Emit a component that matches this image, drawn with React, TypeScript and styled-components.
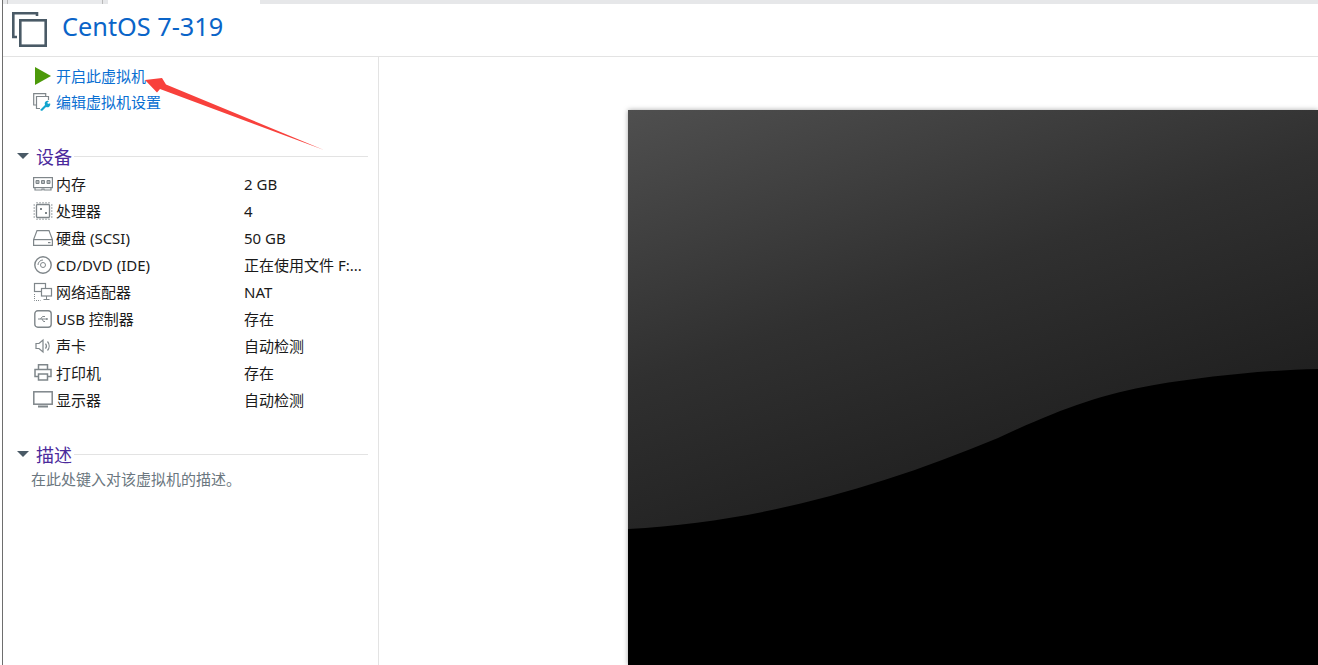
import styled, { createGlobalStyle } from "styled-components";

const GlobalStyle = createGlobalStyle`
    html, body {
        margin: 0;
        padding: 0;
        height: 100%;
        background: #ffffff;
        overflow: hidden;
    }
    #root {
        height: 100%;
    }
`;

const Page = styled.div`
    position: relative;
    width: 1318px;
    height: 665px;
    box-sizing: border-box;
    padding-left: 3px;
    display: flex;
    flex-direction: column;
    font-family: "Noto Sans", "Noto Sans CJK SC", sans-serif;
    overflow: hidden;
    background: linear-gradient(90deg, #ffffff 0, #ffffff 2px, #6e6e6e 2px, #6e6e6e 3px, #ffffff 3px);
`;

const TabStrip = styled.div`
    height: 4px;
    flex: none;
    display: flex;
    background: #e6e7e9;
    padding-left: 4px;
`;

const Tab = styled.div<{ $active?: boolean; $width: number; $gap?: number }>`
    width: ${(props) => props.$width}px;
    margin-left: ${(props) => props.$gap ?? 0}px;
    background: ${(props) => (props.$active ? "#ffffff" : "#e9eaec")};
    border: 0 solid #b9b9b9;
    border-width: ${(props) => (props.$active ? "0" : "0 1px")};
    box-sizing: border-box;
`;

const Header = styled.header`
    height: 53px;
    flex: none;
    box-sizing: border-box;
    display: flex;
    align-items: center;
    gap: 14px;
    padding: 0 0 2px 9px;
    border-bottom: 1px solid #e3e3e3;
`;

const VmName = styled.h1`
    margin: 0 0 6px;
    font-size: 25.3px;
    font-weight: 400;
    color: #0a64c8;
    line-height: 32px;
`;

const Body = styled.div`
    flex: 1;
    display: flex;
    min-height: 0;
`;

const Sidebar = styled.aside`
    width: 376px;
    flex: none;
    box-sizing: border-box;
    border-right: 1px solid #e3e3e3;
    padding: 6px 10px 0 13px;
    display: flex;
    flex-direction: column;
`;

const Action = styled.div`
    height: 26px;
    box-sizing: border-box;
    display: flex;
    align-items: center;
    gap: 5px;
    padding: 0 0 2px 17px;
    font-size: 15px;
    color: #0a6fd2;
`;

const ActionIcon = styled.span`
    width: 18px;
    height: 18px;
    margin-top: 2px;
    display: flex;
    align-items: center;
    justify-content: center;
    flex: none;
`;

const SectionHead = styled.div<{ $top: number }>`
    display: flex;
    align-items: center;
    height: 24px;
    margin-top: ${(props) => props.$top}px;
`;

const SectionTitle = styled.span`
    font-size: 18px;
    color: #4b2a9c;
    margin-left: 7px;
    margin-right: 2px;
`;

const SectionRule = styled.span`
    flex: 1;
    height: 1px;
    background: #e3e3e3;
`;

const Triangle = styled.span`
    width: 0;
    height: 0;
    margin-left: 1px;
    border-left: 6px solid transparent;
    border-right: 6px solid transparent;
    border-top: 6px solid #4a5a66;
`;

const DeviceList = styled.div`
    display: flex;
    flex-direction: column;
    margin-top: 2px;
`;

const DeviceRow = styled.div`
    height: 27px;
    display: flex;
    align-items: center;
    font-size: 15px;
    color: #1a1a1a;
    padding-left: 17px;
`;

const DeviceIcon = styled.span`
    width: 20px;
    height: 20px;
    margin-right: 3px;
    display: flex;
    align-items: center;
    justify-content: center;
    flex: none;
`;

const DeviceName = styled.span`
    width: 188px;
    flex: none;
    white-space: nowrap;
`;

const Description = styled.div`
    font-size: 15px;
    color: #6b7780;
    margin: 1px 0 0 15px;
    line-height: 24px;
`;

const Main = styled.main`
    flex: 1;
    min-width: 0;
    padding: 53px 0 0 249px;
`;

const Screen = styled.div`
    width: 690px;
    height: 555px;
    box-shadow: 0 0 5px rgba(0, 0, 0, 0.35);
    background: #000000;
`;

const ScreenArt = styled.svg`
    display: block;
`;

const Arrow = styled.svg`
    position: absolute;
    left: 0;
    top: 0;
    pointer-events: none;
`;

const Gray = "#7f868a";

const icons = {
    memory: (
        <svg width="20" height="14" viewBox="0 0 20 14" fill="none" stroke={Gray} strokeWidth="1.200">
            <rect x="0.600" y="0.600" width="18.800" height="10" />
            <path d="M3 3.500h3v3H3zM8.500 3.500h3v3h-3zM14 3.500h3v3h-3z" fill="#b5b9bb" strokeWidth="1" />
            <path d="M2 11v2h7v-1h2v1h7v-2" />
        </svg>
    ),
    cpu: (
        <svg width="20" height="20" viewBox="0 0 20 20" fill="none" stroke={Gray}>
            <rect x="3.500" y="3.500" width="13" height="13" rx="1" strokeWidth="1.300" />
            <path d="M4 1v1.500M7 1v1.500M10 1v1.500M13 1v1.500M16 1v1.500M4 17.500V19M7 17.500V19M10 17.500V19M13 17.500V19M16 17.500V19M.5 4H2M.5 7H2M.5 10H2M.5 13H2M.5 16H2M18 4h1.500M18 7h1.500M18 10h1.500M18 13h1.500M18 16h1.500" />
            <path d="M7 7h2v2H7zM12 11h2v2h-2z" fill={Gray} stroke="none" />
        </svg>
    ),
    disk: (
        <svg width="20" height="16" viewBox="0 0 20 16" fill="none" stroke={Gray} strokeWidth="1.200">
            <path d="M4 .6h12l3.400 9v5.800H.6V9.600z" />
            <path d="M.6 9.600h18.800" />
            <path d="M15 12h2.500v1.200H15z" fill={Gray} stroke="none" />
        </svg>
    ),
    cd: (
        <svg width="18" height="18" viewBox="0 0 18 18" fill="none" stroke={Gray}>
            <circle cx="9" cy="9" r="8.200" strokeWidth="1.400" />
            <circle cx="9" cy="9" r="2.500" />
            <path d="M4 9a5 5 0 0 1 5-5" />
        </svg>
    ),
    network: (
        <svg width="20" height="20" viewBox="0 0 20 20" fill="none" stroke={Gray}>
            <rect x="1.500" y="1.500" width="11" height="8" fill="#fff" strokeWidth="1.200" />
            <rect x="8.500" y="6.500" width="10" height="7.500" fill="#fff" strokeWidth="1.200" />
            <path d="M13.500 14v3M10.500 17.500h6" />
            <path d="M1.500 12v6.500h6" strokeDasharray="1 1" />
        </svg>
    ),
    usb: (
        <svg width="18" height="18" viewBox="0 0 18 18" fill="none" stroke={Gray}>
            <rect x="0.800" y="0.800" width="16.400" height="16.400" rx="3" strokeWidth="1.400" />
            <path d="M4 9h10M6.500 9l2-2.500H11M8 9l1.500 2.500H11" />
            <path d="M12 8l2 1-2 1z" fill={Gray} stroke="none" />
        </svg>
    ),
    sound: (
        <svg width="16" height="16" viewBox="0 0 16 16" fill="none" stroke={Gray} strokeWidth="1.200">
            <path d="M1 5.500h3L8 2v12l-4-3.500H1z" />
            <path d="M10.500 5.500a4 4 0 0 1 0 5M12.500 3.500a7 7 0 0 1 0 9" />
        </svg>
    ),
    printer: (
        <svg width="18" height="17" viewBox="0 0 18 17" fill="none" stroke={Gray} strokeWidth="1.500">
            <path d="M4.500 5V.8h9V5" />
            <path d="M4.500 12.500H1V5.500h16v7h-3.500" />
            <rect x="4.500" y="10" width="9" height="6" />
        </svg>
    ),
    display: (
        <svg width="20" height="17" viewBox="0 0 20 17" fill="none" stroke={Gray} strokeWidth="1.500">
            <rect x="0.800" y="0.800" width="18.400" height="12.400" />
            <path d="M5 15.500h10" strokeWidth="2" />
        </svg>
    ),
};

const devices = [
    { icon: icons.memory, name: "内存", value: "2 GB" },
    { icon: icons.cpu, name: "处理器", value: "4" },
    { icon: icons.disk, name: "硬盘 (SCSI)", value: "50 GB" },
    { icon: icons.cd, name: "CD/DVD (IDE)", value: "正在使用文件 F:..." },
    { icon: icons.network, name: "网络适配器", value: "NAT" },
    { icon: icons.usb, name: "USB 控制器", value: "存在" },
    { icon: icons.sound, name: "声卡", value: "自动检测" },
    { icon: icons.printer, name: "打印机", value: "存在" },
    { icon: icons.display, name: "显示器", value: "自动检测" },
];

const App = () => {
    return (
        <Page>
            <GlobalStyle />
            <TabStrip>
                <Tab $width={96} />
                <Tab $width={152} $gap={5} $active />
            </TabStrip>
            <Header>
                <svg width="36" height="35" viewBox="0 0 36 35" fill="none" stroke="#4a5a66" strokeWidth="2.600">
                    <path d="M5 25H1.300V1.300H25V4" />
                    <rect x="8.300" y="8.300" width="25.400" height="25.400" />
                </svg>
                <VmName>CentOS 7-319</VmName>
            </Header>
            <Body>
                <Sidebar>
                    <Action>
                        <ActionIcon>
                            <svg width="18" height="18" viewBox="0 0 18 18">
                                <path d="M2 0l16 9-16 9z" fill="#4c9a0a" />
                            </svg>
                        </ActionIcon>
                        开启此虚拟机
                    </Action>
                    <Action>
                        <ActionIcon>
                            <svg width="18" height="18" viewBox="0 0 18 18" fill="none">
                                <path d="M3 12H.7V.7h12V3" stroke="#7f868a" strokeWidth="1.200" />
                                <path d="M7 15.500H3.500v-12h12V7" stroke="#7f868a" strokeWidth="1.200" />
                                <path d="M7 17l5-5a3 3 0 0 1 4-4l-2 2 2 1 1-1a3 3 0 0 1-4 4l-4 4z" fill="#12a5cf" />
                            </svg>
                        </ActionIcon>
                        编辑虚拟机设置
                    </Action>
                    <SectionHead $top={29}>
                        <Triangle />
                        <SectionTitle>设备</SectionTitle>
                        <SectionRule />
                    </SectionHead>
                    <DeviceList>
                        {devices.map((device) => (
                            <DeviceRow key={device.name}>
                                <DeviceIcon>{device.icon}</DeviceIcon>
                                <DeviceName>{device.name}</DeviceName>
                                <span>{device.value}</span>
                            </DeviceRow>
                        ))}
                    </DeviceList>
                    <SectionHead $top={29}>
                        <Triangle />
                        <SectionTitle>描述</SectionTitle>
                        <SectionRule />
                    </SectionHead>
                    <Description>在此处键入对该虚拟机的描述。</Description>
                </Sidebar>
                <Main>
                    <Screen>
                        <ScreenArt width="690" height="555" viewBox="0 0 690 555">
                            <defs>
                                <linearGradient id="sheen" x1="0" y1="0" x2="0.55" y2="1">
                                    <stop offset="0" stopColor="#4f4f4f" />
                                    <stop offset="0.5" stopColor="#303030" />
                                    <stop offset="1" stopColor="#1c1c1c" />
                                </linearGradient>
                            </defs>
                            <rect width="690" height="555" fill="#000000" />
                            <path
                                d="M0 419C130 412 250 378 370 328C430 300 470 285 526 275C580 266 640 260 690 259V0H0Z"
                                fill="url(#sheen)"
                            />
                        </ScreenArt>
                    </Screen>
                </Main>
            </Body>
            <Arrow width="1318" height="665" viewBox="0 0 1318 665">
                <path d="M324 150L166 84.500L162 78L145 80L157 92.500L160 89Z" fill="#f8413c" />
            </Arrow>
        </Page>
    );
};

export default App;
